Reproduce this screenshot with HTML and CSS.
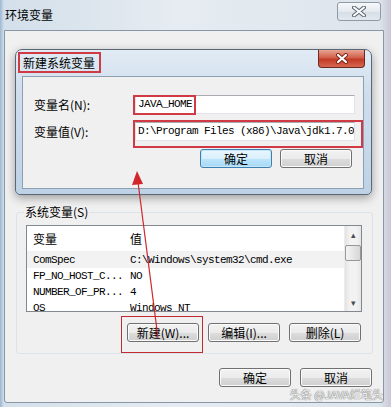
FILE: index.html
```html
<!DOCTYPE html>
<html lang="zh-CN">

<head>
    <meta charset="UTF-8">
    <title>环境变量</title>
    <link rel="stylesheet" href="styles.css">
</head>

<body>
    <!-- outer window: 环境变量 -->
    <div class="window">
        <div class="titlebar">
            <span class="title">环境变量</span>
            <span class="close-btn">
                <svg width="14" height="11" viewBox="0 0 14 11">
                    <path d="M2 1.5 L12 9.5 M12 1.5 L2 9.5" stroke="#5b6673" stroke-width="4" stroke-linecap="round" />
                    <path d="M2 1.5 L12 9.5 M12 1.5 L2 9.5" stroke="#fff" stroke-width="2" stroke-linecap="round" />
                </svg>
            </span>
        </div>

        <div class="client">
            <fieldset class="group">
                <legend>系统变量(S)</legend>

                <!-- variable list -->
                <div class="list">
                    <div class="list-body">
                        <div class="list-head"><span class="col-name">变量</span><span>值</span></div>
                        <div class="row selected"><span class="col-name">ComSpec</span><span>C:\Windows\system32\cmd.exe</span></div>
                        <div class="row"><span class="col-name">FP_NO_HOST_C...</span><span>NO</span></div>
                        <div class="row"><span class="col-name">NUMBER_OF_PR...</span><span>4</span></div>
                        <div class="row"><span class="col-name">OS</span><span>Windows_NT</span></div>
                    </div>
                    <div class="scrollbar">
                        <div class="sb-arrow">&#9652;</div>
                        <div class="sb-thumb"></div>
                        <div class="sb-track"></div>
                        <div class="sb-arrow">&#9662;</div>
                    </div>
                </div>

                <div class="buttons group-buttons">
                    <button class="btn">新建(W)...</button>
                    <button class="btn">编辑(I)...</button>
                    <button class="btn">删除(L)</button>
                </div>
            </fieldset>

            <div class="buttons footer-buttons">
                <button class="btn">确定</button>
                <button class="btn">取消</button>
            </div>
        </div>
    </div>

    <!-- dialog on top: 新建系统变量 -->
    <div class="dialog">
        <div class="dialog-titlebar">
            <span class="dialog-title">新建系统变量</span>
            <span class="dialog-close">
                <svg width="14" height="11" viewBox="0 0 14 11">
                    <path d="M3 2 L11 9 M11 2 L3 9" stroke="#7a2219" stroke-width="4" stroke-linecap="round" />
                    <path d="M3 2 L11 9 M11 2 L3 9" stroke="#fff" stroke-width="2.2" stroke-linecap="round" />
                </svg>
            </span>
        </div>
        <div class="dialog-client">
            <div class="field">
                <span class="field-label">变量名(N):</span>
                <div class="input">JAVA_HOME</div>
            </div>
            <div class="field">
                <span class="field-label">变量值(V):</span>
                <div class="input">D:\Program Files (x86)\Java\jdk1.7.0_79</div>
            </div>
            <div class="buttons dialog-buttons">
                <button class="btn btn-default">确定</button>
                <button class="btn">取消</button>
            </div>
        </div>
    </div>

    <!-- red annotations -->
    <div class="mark mark-title"></div>
    <div class="mark mark-name"></div>
    <div class="mark mark-value"></div>
    <div class="mark mark-new"></div>
    <svg class="note-arrow" width="391" height="407" viewBox="0 0 391 407">
        <line x1="158" y1="338" x2="138" y2="182" stroke="#d0262c" stroke-width="1.2" />
        <polygon points="137,171 132,185 143,184" fill="#d0262c" />
    </svg>

    <div class="watermark">头条 @JAVA烂笔头</div>
</body>

</html>
```

FILE: styles.css
```css
* {
    box-sizing: border-box;
}

body {
    margin: 0;
    width: 391px;
    height: 407px;
    overflow: hidden;
    position: relative;
    background: #c3d3e3;
    font-family: "Noto Sans CJK SC", "Noto Sans", sans-serif;
    font-size: 12px;
    color: #000;
}

/* outer window */
.window {
    height: 407px;
    padding: 0 7px 4px 4px;
    display: flex;
    flex-direction: column;
    background: linear-gradient(to right, #9cb7d2 0, #d3dfea 4px, #e6ecf1 45%, #dde5ec 97%, #cbc6d8 100%);
}

.titlebar {
    height: 30px;
    display: flex;
    justify-content: space-between;
    align-items: flex-start;
}

.title {
    margin-top: 8px;
    padding-left: 1px;
    line-height: 14px;
}

.close-btn {
    width: 44px;
    height: 19px;
    margin-top: 2px;
    margin-right: 3px;
    display: flex;
    align-items: center;
    justify-content: center;
    border: 1px solid #8e9aa8;
    border-radius: 3px;
    background: linear-gradient(#f7f9fb, #e4e9ee 50%, #d6dde5 51%, #e2e8ee);
}

.client {
    flex: 1;
    background: #f0f0f0;
    border: 1px solid #8797a8;
    border-radius: 0 0 3px 3px;
    padding: 174px 10px 0 11px;
}

.group {
    margin: 0;
    min-width: 0;
    padding: 6px 10px 11px 9px;
    border: 1px solid #dde4e9;
    border-radius: 3px;
}

.group legend {
    padding: 0 1px;
    margin-left: -2px;
    line-height: 14px;
}

/* list view */
.list {
    height: 87px;
    display: flex;
    background: #fff;
    border: 1px solid #828790;
}

.list-body {
    flex: 1;
    overflow: hidden;
}

.list-head {
    height: 26px;
    display: flex;
    align-items: center;
    padding-left: 6px;
    border-bottom: 1px solid #eef0f3;
    line-height: 14px;
}

.row {
    height: 16px;
    display: flex;
    align-items: center;
    padding-left: 6px;
    white-space: nowrap;
    font-family: "Liberation Mono", monospace;
    font-size: 11px;
    letter-spacing: -0.6px;
}

.row.selected {
    background: #f2f2f2;
}

.col-name {
    width: 97px;
    flex-shrink: 0;
}

.scrollbar {
    width: 17px;
    display: flex;
    flex-direction: column;
    background: linear-gradient(to right, #e3e3e3, #f2f2f2 30%, #f2f2f2 70%, #e6e6e6);
    border-left: 1px solid #ececec;
}

.sb-arrow {
    height: 17px;
    display: flex;
    align-items: center;
    justify-content: center;
    font-size: 9px;
    color: #4d4d4d;
    line-height: 1;
}

.sb-thumb {
    height: 16px;
    margin: 2px 0 0;
    border: 1px solid #979797;
    border-radius: 2px;
    background: linear-gradient(to right, #f4f4f4, #e6e6e6 50%, #d6d6d6);
}

.sb-track {
    flex: 1;
}

/* buttons */
.buttons {
    display: flex;
    justify-content: flex-end;
    gap: 9px;
}

.group-buttons {
    margin-top: 11px;
    margin-right: 1px;
}

.footer-buttons {
    margin-top: 14px;
    margin-right: 1px;
}

.btn {
    width: 72px;
    height: 19px;
    padding: 0;
    border: 1px solid #707070;
    border-radius: 3px;
    background: linear-gradient(#f2f2f2 0, #ebebeb 50%, #dddddd 51%, #cfcfcf 100%);
    box-shadow: inset 0 0 0 1px #fbfbfb;
    font-family: "Noto Sans CJK SC", sans-serif;
    font-size: 12px;
    line-height: 16px;
    color: #000;
}

.btn-default {
    border-color: #3c7fb1;
    background: linear-gradient(#eaf6fd 0, #d9f0fc 50%, #bee6fd 51%, #a7d9f5 100%);
    box-shadow: inset 0 0 0 1px #c5e6f7;
}

/* dialog */
.dialog {
    position: absolute;
    left: 15px;
    top: 49px;
    width: 357px;
    height: 146px;
    display: flex;
    flex-direction: column;
    padding: 0 7px 5px 6px;
    border: 1px solid #5b6878;
    border-radius: 7px 7px 5px 5px;
    background: linear-gradient(#e2ebf4, #cfdeed 30%, #bed2e6);
    box-shadow: 0 3px 10px rgba(0, 0, 0, 0.35);
}

.dialog-titlebar {
    height: 26px;
    display: flex;
    justify-content: space-between;
    align-items: flex-start;
}

.dialog-title {
    margin-top: 6px;
    padding-left: 1px;
    line-height: 14px;
}

.dialog-close {
    width: 47px;
    height: 18px;
    margin-right: -1px;
    display: flex;
    align-items: center;
    justify-content: center;
    border: 1px solid #6b2a22;
    border-top: none;
    border-radius: 0 0 4px 4px;
    background: linear-gradient(#e8a593, #d2604a 45%, #c13a26 55%, #d7664f);
}

.dialog-client {
    flex: 1;
    background: #f0f0f0;
    border: 1px solid #8d9fb3;
    padding: 18px 8px 0 11px;
}

.field {
    height: 19px;
    display: flex;
    align-items: center;
    margin-bottom: 8px;
}

.field-label {
    width: 101px;
    flex-shrink: 0;
    line-height: 14px;
}

.input {
    flex: 1;
    height: 19px;
    padding-left: 2px;
    overflow: hidden;
    white-space: nowrap;
    background: #fff;
    border: 1px solid #e2e3ea;
    border-top-color: #abadb3;
    font-family: "Liberation Mono", monospace;
    font-size: 11px;
    letter-spacing: -0.6px;
    line-height: 17px;
}

.dialog-buttons {
    margin-top: 7px;
    margin-right: 3px;
    gap: 8px;
}

/* red annotations */
.mark {
    position: absolute;
    border: 2px solid #d03a44;
}

.mark-title {
    left: 18px;
    top: 52px;
    width: 83px;
    height: 21px;
}

.mark-name {
    left: 133px;
    top: 95px;
    width: 63px;
    height: 20px;
}

.mark-value {
    left: 133px;
    top: 120px;
    width: 230px;
    height: 28px;
}

.mark-new {
    left: 121px;
    top: 316px;
    width: 82px;
    height: 37px;
    border-width: 1px;
    border-color: #c12a31;
}

.note-arrow {
    position: absolute;
    left: 0;
    top: 0;
    pointer-events: none;
}

.watermark {
    position: absolute;
    right: 8px;
    bottom: 6px;
    font-size: 11px;
    line-height: 13px;
    color: #f4f4f4;
    text-shadow: 0 0 1px #666, 0 0 1px #666;
}
```
